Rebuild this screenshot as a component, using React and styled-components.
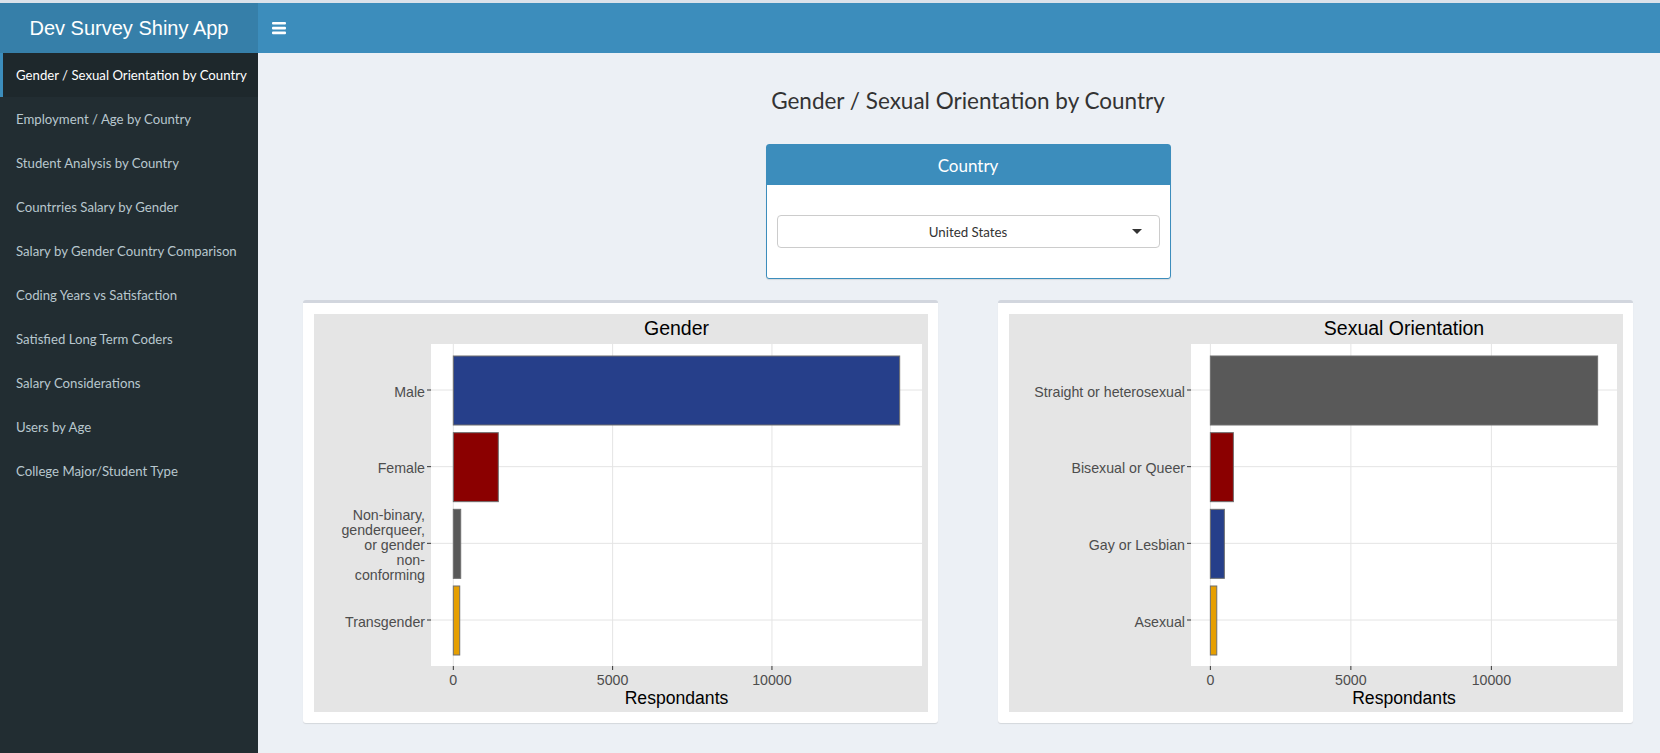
import React from 'react'
import styled, { createGlobalStyle } from 'styled-components'

const GlobalStyle = createGlobalStyle`
  html, body {
    margin: 0;
    padding: 0;
    height: 100%;
  }
  body {
    background: #ecf0f5;
    font-family: 'Source Sans Pro', Lato, 'Helvetica Neue', Arial, sans-serif;
    overflow: hidden;
  }
  #root { height: 100%; }
`

const Page = styled.div`
  display: flex;
  flex-direction: column;
  height: 100vh;
  box-sizing: border-box;
  border-top: 3px solid #dbe2ea;
`

const Header = styled.header`
  display: flex;
  height: 50px;
  flex-shrink: 0;
`

const Logo = styled.div`
  width: 258px;
  flex-shrink: 0;
  background: #367fa9;
  color: #fff;
  font-family: 'Liberation Sans', Arial, sans-serif;
  font-size: 20px;
  display: flex;
  align-items: center;
  justify-content: center;
`

const Navbar = styled.nav`
  flex: 1;
  background: #3c8dbc;
  display: flex;
  align-items: center;
`

const Toggle = styled.button`
  background: none;
  border: 0;
  padding: 0 0 0 14px;
  display: flex;
  align-items: center;
  cursor: pointer;
`

const Body = styled.div`
  display: flex;
  flex: 1;
  min-height: 0;
`

const Sidebar = styled.aside`
  width: 258px;
  flex-shrink: 0;
  background: #222d32;
`

const MenuItem = styled.a`
  display: flex;
  align-items: center;
  height: 44px;
  box-sizing: border-box;
  padding: 0 5px 0 13px;
  border-left: 3px solid ${p => (p.$active ? '#3c8dbc' : 'transparent')};
  background: ${p => (p.$active ? '#1e282c' : 'transparent')};
  color: ${p => (p.$active ? '#fff' : '#b8c7ce')};
  font-size: 13.2px;
  text-decoration: none;
  white-space: nowrap;
`

const Main = styled.main`
  flex: 1;
  display: flex;
  flex-direction: column;
  padding: 0 28px 0 45px;
`

const Title = styled.h2`
  margin: 35px 0 0;
  text-align: center;
  font-size: 22.5px;
  line-height: 26px;
  font-weight: 400;
  color: #333;
`

const CountryBox = styled.section`
  align-self: center;
  width: 403px;
  margin-top: 30px;
  background: #fff;
  border: 1px solid #3c8dbc;
  border-radius: 3px;
  box-shadow: 0 1px 1px rgba(0, 0, 0, 0.1);
`

const BoxHeader = styled.div`
  height: 40px;
  background: #3c8dbc;
  color: #fff;
  font-size: 17px;
  display: flex;
  align-items: center;
  justify-content: center;
`

const BoxBody = styled.div`
  padding: 30px 10px;
`

const Select = styled.div`
  height: 33px;
  box-sizing: border-box;
  border: 1px solid #ccc;
  border-radius: 4px;
  display: grid;
  grid-template-columns: 1fr auto 1fr;
  align-items: center;
  font-size: 13.3px;
  color: #333;
`

const SelectValue = styled.span`
  grid-column: 2;
`

const Caret = styled.span`
  grid-column: 3;
  justify-self: end;
  margin-right: 17px;
  width: 0;
  height: 0;
  border-top: 5px solid #333;
  border-left: 5px solid transparent;
  border-right: 5px solid transparent;
`

const ChartRow = styled.div`
  display: grid;
  grid-template-columns: 1fr 1fr;
  gap: 60px;
  margin-top: 21px;
`

const ChartBox = styled.div`
  background: #fff;
  border-top: 3px solid #d2d6de;
  border-radius: 3px;
  box-shadow: 0 1px 1px rgba(0, 0, 0, 0.1);
  padding: 11px 10px 11px 11px;
`

const Plot = styled.svg`
  display: block;
  font-family: 'Liberation Sans', Arial, sans-serif;
`

const menu = [
  'Gender / Sexual Orientation by Country',
  'Employment / Age by Country',
  'Student Analysis by Country',
  'Countrries Salary by Gender',
  'Salary by Gender Country Comparison',
  'Coding Years vs Satisfaction',
  'Satisfied Long Term Coders',
  'Salary Considerations',
  'Users by Age',
  'College Major/Student Type',
]

const gender = [
  { label: ['Male'], value: 14009, color: '#263f8a' },
  { label: ['Female'], value: 1412, color: '#8b0000' },
  { label: ['Non-binary,', 'genderqueer,', 'or gender', 'non-', 'conforming'], value: 232, color: '#595959' },
  { label: ['Transgender'], value: 201, color: '#e69f00' },
]

const orientation = [
  { label: ['Straight or heterosexual'], value: 13782, color: '#595959' },
  { label: ['Bisexual or Queer'], value: 819, color: '#8b0000' },
  { label: ['Gay or Lesbian'], value: 498, color: '#263f8a' },
  { label: ['Asexual'], value: 228, color: '#e69f00' },
]

function BarChart({ title, data, panelLeft }) {
  const W = 614
  const H = 398
  const top = 30
  const bottom = 352
  const right = 608
  const pw = right - panelLeft
  const max = Math.max(...data.map(d => d.value))
  const scale = pw / (max * 1.1)
  const x0 = panelLeft + max * 0.05 * scale
  const unit = (bottom - top) / (data.length + 0.2)
  const breaks = [0, 5000, 10000]
  const mid = (panelLeft + right) / 2

  return (
    <Plot width={W} height={H} viewBox={`0 0 ${W} ${H}`}>
      <rect x="0" y="0" width={W} height={H} fill="#e5e5e5" />
      <text x={mid} y="14" fontSize="19.5" fill="#000" textAnchor="middle" dominantBaseline="central">
        {title}
      </text>
      <rect x={panelLeft} y={top} width={pw} height={bottom - top} fill="#fff" />
      {breaks.map(b => (
        <line key={b} x1={x0 + b * scale} x2={x0 + b * scale} y1={top} y2={bottom} stroke="#e4e4e4" />
      ))}
      {data.map((d, i) => {
        const cy = top + (0.6 + i) * unit
        return <line key={i} x1={panelLeft} x2={right} y1={cy} y2={cy} stroke="#e4e4e4" />
      })}
      {data.map((d, i) => {
        const cy = top + (0.6 + i) * unit
        const bh = unit * 0.9
        return (
          <rect key={i} x={x0} y={cy - bh / 2 + 0.5} width={d.value * scale} height={bh}
            fill={d.color} stroke="#6e6e6e" strokeWidth="1" />
        )
      })}
      {data.map((d, i) => {
        const cy = top + (0.6 + i) * unit
        const n = d.label.length
        return (
          <g key={i}>
            <line x1={panelLeft - 4} x2={panelLeft} y1={cy} y2={cy} stroke="#333" />
            <text x={panelLeft - 6} fontSize="14.2" fill="#4d4d4d" textAnchor="end">
              {d.label.map((l, j) => (
                <tspan key={j} x={panelLeft - 6} y={cy + 1.5 + (j - (n - 1) / 2) * 15} dominantBaseline="central">
                  {l}
                </tspan>
              ))}
            </text>
          </g>
        )
      })}
      {breaks.map(b => (
        <g key={b}>
          <line x1={x0 + b * scale} x2={x0 + b * scale} y1={bottom} y2={bottom + 4} stroke="#333" />
          <text x={x0 + b * scale} y="366" fontSize="14.2" fill="#4d4d4d" textAnchor="middle" dominantBaseline="central">
            {b}
          </text>
        </g>
      ))}
      <text x={mid} y="384" fontSize="17.6" fill="#000" textAnchor="middle" dominantBaseline="central">
        Respondants
      </text>
    </Plot>
  )
}

function BarsIcon() {
  return (
    <svg width="14" height="13" viewBox="0 0 14 13">
      <rect x="0" y="0" width="14" height="2.6" rx="1" fill="#fff" />
      <rect x="0" y="4.8" width="14" height="2.6" rx="1" fill="#fff" />
      <rect x="0" y="9.6" width="14" height="2.6" rx="1" fill="#fff" />
    </svg>
  )
}

export default function App() {
  return (
    <>
      <GlobalStyle />
      <Page>
        <Header>
          <Logo>Dev Survey Shiny App</Logo>
          <Navbar>
            <Toggle aria-label="Toggle navigation">
              <BarsIcon />
            </Toggle>
          </Navbar>
        </Header>
        <Body>
          <Sidebar>
            {menu.map((m, i) => (
              <MenuItem key={m} href="#" $active={i === 0}>{m}</MenuItem>
            ))}
          </Sidebar>
          <Main>
            <Title>Gender / Sexual Orientation by Country</Title>
            <CountryBox>
              <BoxHeader>Country</BoxHeader>
              <BoxBody>
                <Select>
                  <SelectValue>United States</SelectValue>
                  <Caret />
                </Select>
              </BoxBody>
            </CountryBox>
            <ChartRow>
              <ChartBox>
                <BarChart title="Gender" data={gender} panelLeft={117} />
              </ChartBox>
              <ChartBox>
                <BarChart title="Sexual Orientation" data={orientation} panelLeft={182} />
              </ChartBox>
            </ChartRow>
          </Main>
        </Body>
      </Page>
    </>
  )
}
